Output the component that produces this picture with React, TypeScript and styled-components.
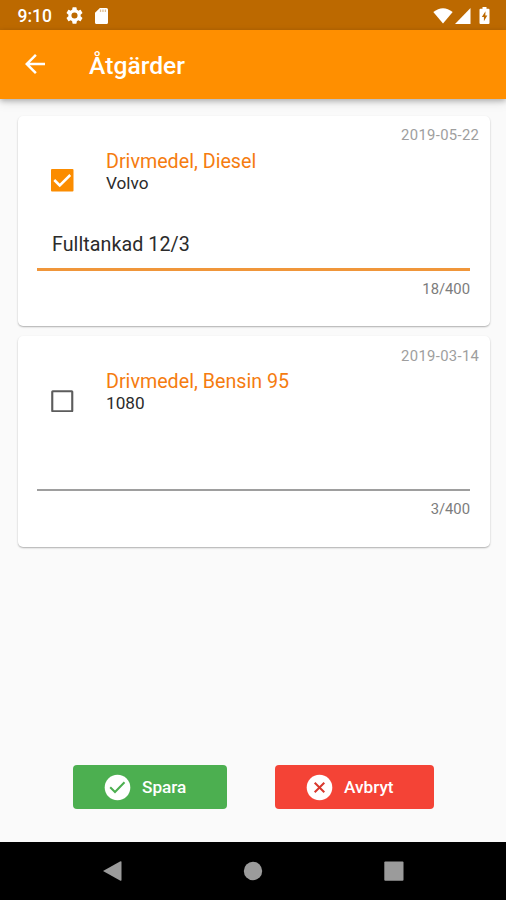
import React from 'react';
import styled, { createGlobalStyle } from 'styled-components';

const GlobalStyle = createGlobalStyle`
  * { box-sizing: border-box; }
  body { margin: 0; background: #fafafa; }
`;

const Screen = styled.div`
  width: 506px;
  height: 900px;
  display: flex;
  flex-direction: column;
  overflow: hidden;
  background: #fafafa;
  color: #2b2b2b;
  font-family: Roboto, 'Liberation Sans', sans-serif;
`;

const StatusBar = styled.div`
  height: 30px;
  flex: none;
  display: flex;
  align-items: center;
  padding: 1px 16px 0 17.5px;
  background: #bc6900;
  color: #fff;
`;

const Clock = styled.span`
  width: 48px;
  font-size: 17.5px;
  font-weight: 500;
  letter-spacing: 0;
  white-space: nowrap;
`;

const Spacer = styled.div`
  flex: 1;
`;

const Icon = styled.svg<{ $gap?: number }>`
  display: block;
  flex: none;
  margin-left: ${({ $gap = 0 }) => $gap}px;
`;

const AppBar = styled.header`
  height: 68.5px;
  flex: none;
  display: flex;
  align-items: center;
  padding: 0 20px;
  background: #ff8f00;
  color: #fff;
  box-shadow: 0 2px 5px rgba(0, 0, 0, 0.24), 0 4px 10px rgba(0, 0, 0, 0.1);
  z-index: 1;
`;

const Title = styled.h1`
  margin: 3px 0 0 39px;
  font-size: 24.6px;
  font-weight: 500;
  line-height: 30px;
  letter-spacing: 0.05px;
`;

const List = styled.main`
  flex: 1;
  display: flex;
  flex-direction: column;
  gap: 10px;
  padding: 17px 16px 0 17.5px;
`;

const Card = styled.article`
  height: 210.5px;
  flex: none;
  display: flex;
  flex-direction: column;
  padding: 10.5px 20px 0;
  border-radius: 5px;
  background: #fff;
  box-shadow: 0 1px 2px rgba(0, 0, 0, 0.24), 0 1px 1px rgba(0, 0, 0, 0.08);
`;

const DateText = styled.time`
  margin-right: -9.3px;
  align-self: flex-end;
  font-size: 14.8px;
  line-height: 18px;
  letter-spacing: 0.35px;
  color: #9e9e9e;
`;

const CardHead = styled.div`
  height: 52px;
  display: flex;
  align-items: flex-start;
  padding: 5px 0 0 13.5px;
`;

const CheckSlot = styled.div`
  padding-top: 20px;
`;

const Labels = styled.div`
  margin: 1.5px 0 0 32.5px;
`;

const Subject = styled.h2`
  margin: 0;
  font-size: 19.7px;
  font-weight: 400;
  line-height: 22px;
  color: #f57c10;
`;

const Detail = styled.p`
  margin: 0;
  font-size: 17.2px;
  line-height: 21px;
`;

const Field = styled.div<{ $active: boolean }>`
  height: ${({ $active }) => ($active ? 75 : 74)}px;
  display: flex;
  align-items: flex-end;
  margin-left: -0.5px;
  padding: 0 15px 11.5px;
  font-size: 19.7px;
  line-height: 24px;
  letter-spacing: 0.05px;
  border-bottom: ${({ $active }) => ($active ? '3px solid #f0963a' : '2px solid #9e9e9e')};
`;

const Counter = styled.span<{ $active: boolean }>`
  margin-top: ${({ $active }) => ($active ? 9 : 9.5)}px;
  align-self: flex-end;
  font-size: 14.8px;
  line-height: 18px;
  color: #7c7c7c;
`;

const Actions = styled.footer`
  height: 92px;
  flex: none;
  display: flex;
  gap: 48px;
  padding: 15px 0 0 73px;
`;

const ActionButton = styled.button<{ $color: string; $width: number }>`
  width: ${({ $width }) => $width}px;
  height: 44px;
  display: flex;
  align-items: center;
  gap: 10px;
  padding: 0 0 0 30px;
  border: 0;
  border-radius: 4px;
  background: ${({ $color }) => $color};
  color: #fff;
  font-family: inherit;
  font-size: 17.2px;
  font-weight: 500;
`;

const NavBar = styled.nav`
  height: 58px;
  flex: none;
  display: flex;
  align-items: center;
  justify-content: space-between;
  padding: 0 102px;
  background: #000;
`;

function Checkbox({ checked }: { checked: boolean }) {
  return (
    <Icon width="22.5" height="22.5" viewBox="0 0 18 18" role="checkbox" aria-checked={checked}>
      {checked ? (
        <>
          <rect width="18" height="18" rx="0.8" fill="#fb8c00" />
          <path d="M2.6 8.8 7 13.2 15.4 4.8" fill="none" stroke="#fff" strokeWidth="2" />
        </>
      ) : (
        <rect x="1" y="1" width="16" height="16" rx="0.4" fill="none" stroke="#5c5c5c" strokeWidth="1.7" />
      )}
    </Icon>
  );
}

interface ActionItem {
  date: string;
  subject: string;
  detail: string;
  note: string;
  counter: string;
  checked: boolean;
}

const items: ActionItem[] = [
  { date: '2019-05-22', subject: 'Drivmedel, Diesel', detail: 'Volvo', note: 'Fulltankad 12/3', counter: '18/400', checked: true },
  { date: '2019-03-14', subject: 'Drivmedel, Bensin 95', detail: '1080', note: '', counter: '3/400', checked: false },
];

export default function App() {
  return (
    <Screen>
      <GlobalStyle />
      <StatusBar>
        <Clock>9:10</Clock>
        <Icon width="17" height="17" viewBox="2 2 20 20">
          <path
            fill="#fff"
            d="M19.14 12.94c.04-.3.06-.61.06-.94 0-.32-.02-.64-.07-.94l2.03-1.58a.49.49 0 0 0 .12-.61l-1.92-3.32a.49.49 0 0 0-.59-.22l-2.39.96c-.5-.38-1.03-.7-1.62-.94l-.36-2.54a.48.48 0 0 0-.48-.41h-3.84a.48.48 0 0 0-.47.41l-.36 2.54c-.59.24-1.13.57-1.62.94l-2.39-.96a.48.48 0 0 0-.59.22L2.74 8.87a.47.47 0 0 0 .12.61l2.03 1.58c-.05.3-.09.63-.09.94s.02.64.07.94l-2.03 1.58a.49.49 0 0 0-.12.61l1.92 3.32c.12.22.37.29.59.22l2.39-.96c.5.38 1.03.7 1.62.94l.36 2.54c.05.24.24.41.48.41h3.84c.24 0 .44-.17.47-.41l.36-2.54c.59-.24 1.13-.56 1.62-.94l2.39.96c.22.08.47 0 .59-.22l1.92-3.32a.47.47 0 0 0-.12-.61l-2.01-1.58zM12 15.6A3.6 3.6 0 1 1 12 8.4a3.6 3.6 0 0 1 0 7.2z"
          />
        </Icon>
        <Icon $gap={12} width="13" height="16" viewBox="4 2 16 20" preserveAspectRatio="none">
          <path fill="#fff" d="M18 2h-8L4 8v12c0 1.1.9 2 2 2h12c1.1 0 2-.9 2-2V4c0-1.100-.9-2-2-2z" />
          <path fill="#dfbd90" d="M10 4h1.600v3H10zM13 4h1.600v3H13zM16 4h1.600v3H16z" />
        </Icon>
        <Spacer />
        <Icon width="20" height="16" viewBox="0 0 20 16">
          <path fill="#fff" d="M.3 4Q10-3.600 19.700 4L10 15.500z" />
        </Icon>
        <Icon $gap={2} width="16" height="16" viewBox="0 0 16 16">
          <path fill="#fff" d="M15.500 0v16H0z" />
        </Icon>
        <Icon $gap={8} width="11" height="17" viewBox="0 0 11 17">
          <path fill="#fff" d="M3.500 0h4v1.700H9.500q1 0 1 1V16q0 1-1 1h-8q-1 0-1-1V2.700q0-1 1-1h2z" />
          <path fill="#bc6900" d="M6.500 4.200 2.800 10h2.100v4.200L8.300 8.500H6.300z" />
        </Icon>
      </StatusBar>
      <AppBar>
        <Icon width="30" height="30" viewBox="0 0 24 24">
          <path fill="#fff" d="M20 11H7.830l5.590-5.590L12 4l-8 8 8 8 1.410-1.410L7.830 13H20v-2z" />
        </Icon>
        <Title>Åtgärder</Title>
      </AppBar>
      <List>
        {items.map((item) => (
          <Card key={item.date}>
            <DateText>{item.date}</DateText>
            <CardHead>
              <CheckSlot>
                <Checkbox checked={item.checked} />
              </CheckSlot>
              <Labels>
                <Subject>{item.subject}</Subject>
                <Detail>{item.detail}</Detail>
              </Labels>
            </CardHead>
            <Field $active={item.checked}>{item.note}</Field>
            <Counter $active={item.checked}>{item.counter}</Counter>
          </Card>
        ))}
      </List>
      <Actions>
        <ActionButton $color="#4caf50" $width={154}>
          <Icon width="29" height="29" viewBox="0 0 29 29">
            <circle cx="14.500" cy="14.500" r="12.800" fill="#fff" />
            <path d="M7.200 14.300 12 19 21.500 9.300" fill="none" stroke="#4caf50" strokeWidth="2" />
          </Icon>
          Spara
        </ActionButton>
        <ActionButton $color="#f44336" $width={159}>
          <Icon width="29" height="29" viewBox="0 0 29 29">
            <circle cx="14.500" cy="14.500" r="12.800" fill="#fff" />
            <path d="m9.700 9.700 9.600 9.600m0-9.600-9.600 9.600" fill="none" stroke="#d8382d" strokeWidth="2" />
          </Icon>
          Avbryt
        </ActionButton>
      </Actions>
      <NavBar>
        <Icon width="20" height="22" viewBox="0 0 20 22">
          <path fill="#9b9b9b" d="M1 11 18 1.500Q19.500.7 19.500 2v18q0 1.300-1.500.5z" />
        </Icon>
        <Icon width="20" height="20" viewBox="0 0 20 20">
          <circle cx="10" cy="10" r="9.200" fill="#9b9b9b" />
        </Icon>
        <Icon width="20" height="20" viewBox="0 0 20 20">
          <rect x=".3" y=".5" width="19.200" height="19.200" rx="1" fill="#9b9b9b" />
        </Icon>
      </NavBar>
    </Screen>
  );
}
